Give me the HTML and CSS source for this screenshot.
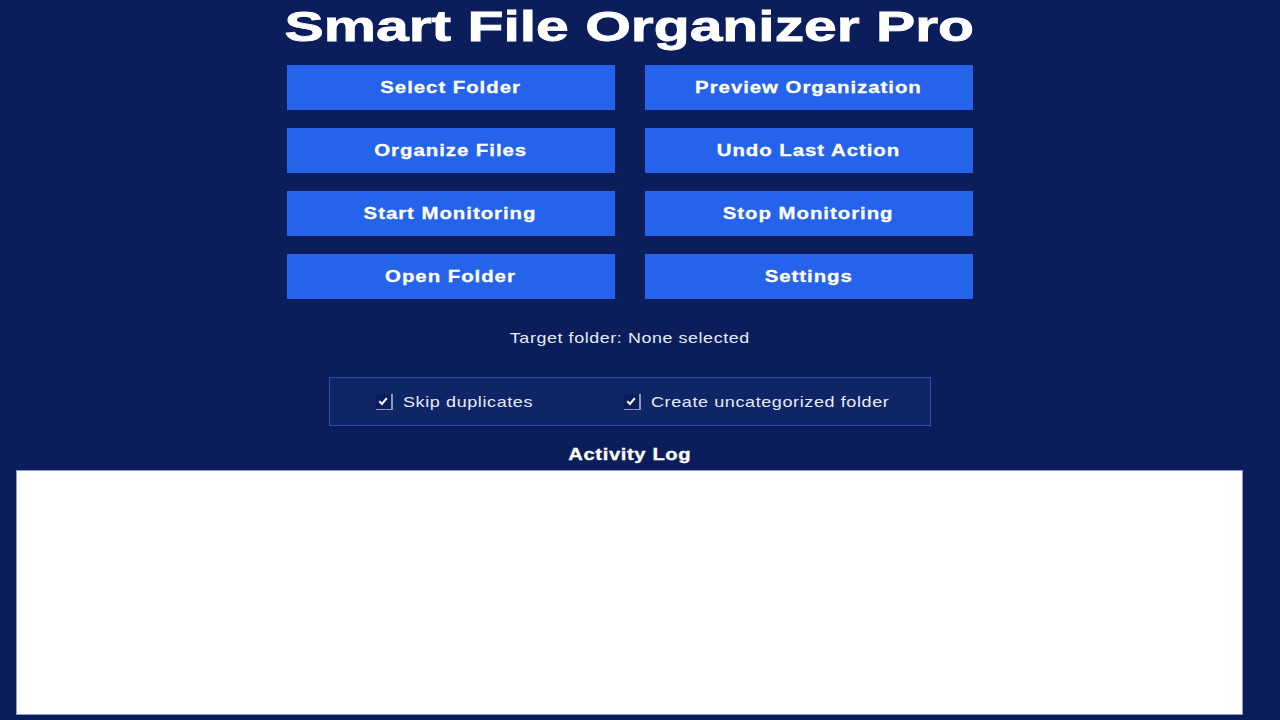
FILE: index.html
```html
<!DOCTYPE html>
<html>
<head>
<meta charset="utf-8">
<link rel="stylesheet" href="styles.css">
</head>
<body>
<div class="app">
  <h1 class="title"><span class="wide-title">Smart File Organizer Pro</span></h1>
  <div class="buttons">
    <button class="btn"><span class="wide">Select Folder</span></button>
    <button class="btn"><span class="wide">Preview Organization</span></button>
    <button class="btn"><span class="wide">Organize Files</span></button>
    <button class="btn"><span class="wide">Undo Last Action</span></button>
    <button class="btn"><span class="wide">Start Monitoring</span></button>
    <button class="btn"><span class="wide">Stop Monitoring</span></button>
    <button class="btn"><span class="wide">Open Folder</span></button>
    <button class="btn"><span class="wide">Settings</span></button>
  </div>
  <div class="target"><span class="wide-text">Target folder: None selected</span></div>
  <div class="options">
    <label class="opt opt-first"><span class="box"><svg viewBox="0 0 12 12" width="12" height="12"><path d="M2.3 6.3 L5 9 L9.8 3.2" fill="none" stroke="#ffffff" stroke-width="2"/></svg></span><span class="opt-text">Skip duplicates</span></label>
    <label class="opt opt-second"><span class="box"><svg viewBox="0 0 12 12" width="12" height="12"><path d="M2.3 6.3 L5 9 L9.8 3.2" fill="none" stroke="#ffffff" stroke-width="2"/></svg></span><span class="opt-text">Create uncategorized folder</span></label>
  </div>
  <div class="log-title"><span class="wide">Activity Log</span></div>
  <div class="log"></div>
</div>
</body>
</html>
```
FILE: styles.css
```css
html, body {
  margin: 0;
  padding: 0;
  background: #0b1e5b;
  width: 1280px;
  height: 720px;
  overflow: hidden;
}
.app {
  width: 1259px;
  box-sizing: border-box;
  padding: 0 16px;
  display: flex;
  flex-direction: column;
  align-items: center;
  font-family: "Liberation Sans", Arial, sans-serif;
  color: #ffffff;
}
.title {
  margin: 3px 0 0 0;
  font-size: 42px;
  font-weight: bold;
  line-height: 48px;
}
.wide-title {
  display: inline-block;
  transform: scaleX(1.40);
  -webkit-text-stroke: 0.8px #ffffff;
}
.wide {
  display: inline-block;
  transform: scaleX(1.2);
  -webkit-text-stroke: 0.3px #ffffff;
}
.wide-text {
  display: inline-block;
  transform: scaleX(1.19);
}
.buttons {
  margin-top: 14px;
  display: grid;
  grid-template-columns: 328px 328px;
  column-gap: 30px;
  row-gap: 18px;
}
.btn {
  height: 45px;
  border: none;
  background: #2563ea;
  color: #ffffff;
  font-family: "Liberation Sans", Arial, sans-serif;
  font-weight: bold;
  font-size: 17px;
  letter-spacing: 0.8px;
  padding: 0;
}
.target {
  margin-top: 30px;
  font-size: 15px;
  letter-spacing: 0.5px;
  color: #e6eaf4;
  line-height: 18px;
}
.options {
  margin-top: 30px;
  width: 602px;
  height: 49px;
  box-sizing: border-box;
  border: 1px solid #2c4db3;
  background: #0f2566;
  display: flex;
  align-items: center;
  padding-left: 46px;
}
.opt {
  display: flex;
  align-items: center;
  font-size: 15px;
  letter-spacing: 0.5px;
  color: #e6eaf4;
}
.opt-second {
  margin-left: 113px;
}
.opt-text {
  display: inline-block;
  transform: scaleX(1.2);
  transform-origin: left center;
}
.box {
  width: 17px;
  height: 16px;
  box-sizing: border-box;
  background: #0b1e5b;
  border-right: 2px solid #8a9bc8;
  border-bottom: 1px solid #8a9bc8;
  display: flex;
  align-items: center;
  justify-content: center;
  margin-right: 10px;
}
.log-title {
  margin-top: 19px;
  font-size: 16px;
  font-weight: bold;
  letter-spacing: 0.5px;
  line-height: 20px;
}
.log-title .wide {
  transform: scaleX(1.26);
}
.log {
  margin-top: 5px;
  align-self: stretch;
  height: 245px;
  background: #ffffff;
  border: 1px solid #8d9cc4;
  box-sizing: border-box;
}
```
